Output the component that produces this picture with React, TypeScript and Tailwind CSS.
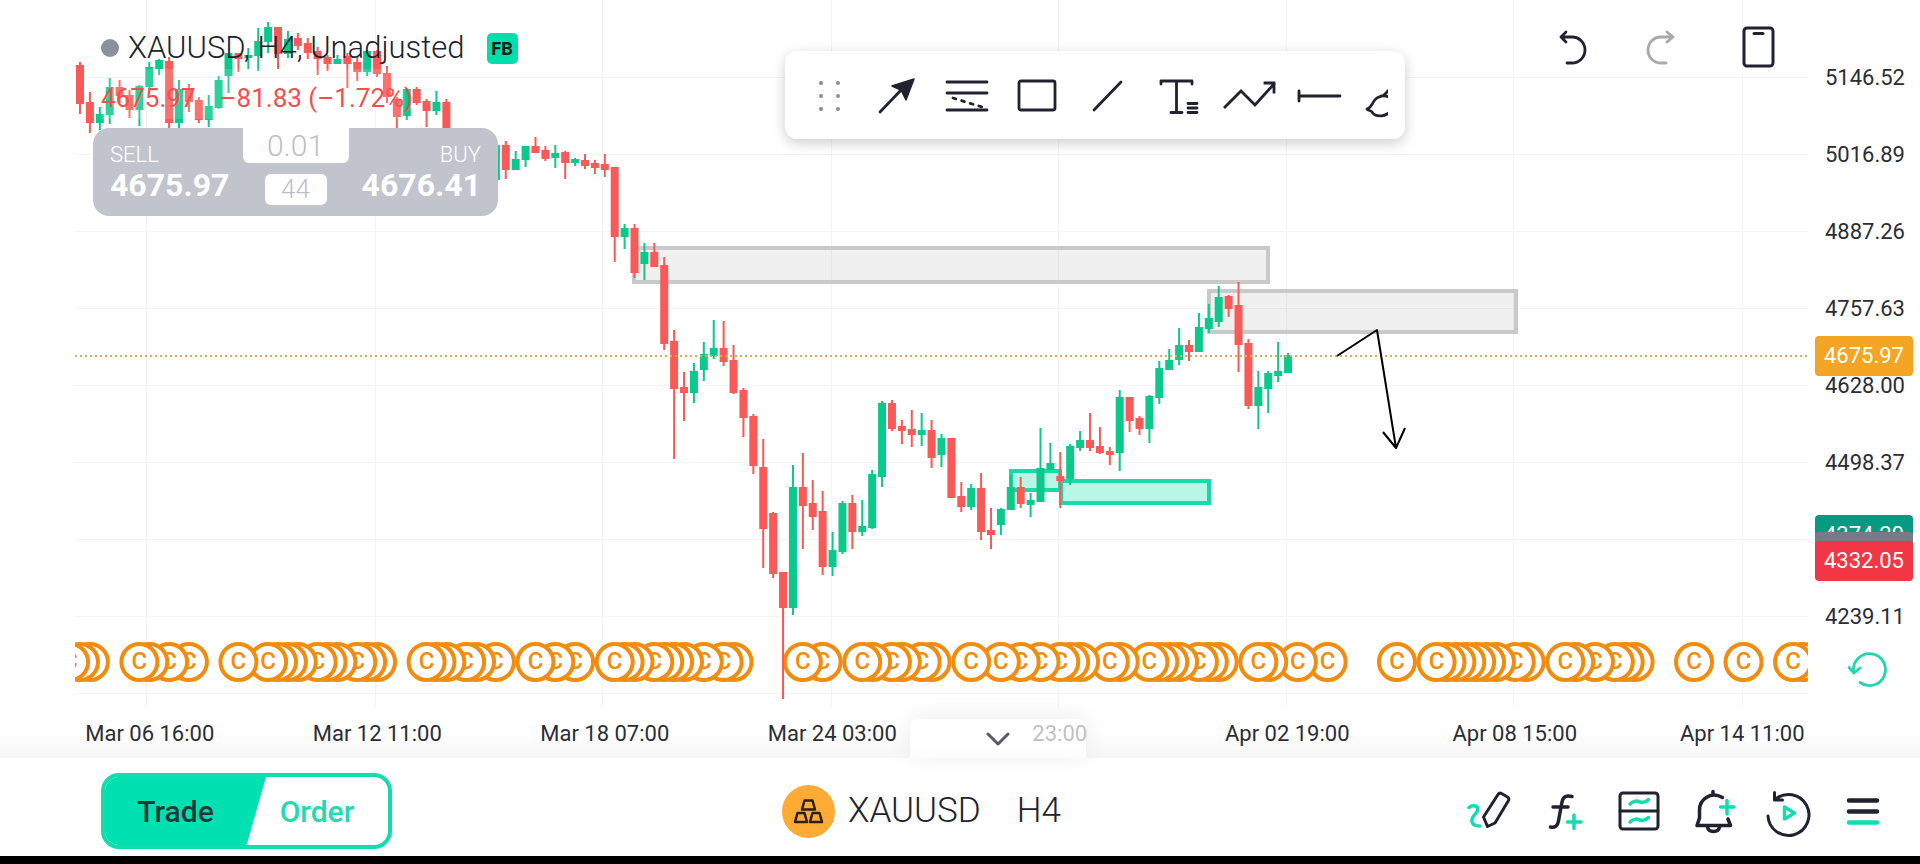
import React from 'react';

// [index, up, high, bodyTop, bodyBottom, low] in chart pixels
type Candle = [number, number, number, number, number, number];

const candles: Candle[] = [
  [0, 0, 62, 65, 104, 114], [1, 0, 92, 102, 123, 133], [2, 1, 107, 114, 123, 130], [3, 1, 78, 87, 115, 124],
  [4, 0, 80, 87, 96, 103], [5, 0, 90, 95, 110, 118], [6, 1, 85, 86, 110, 126], [7, 1, 62, 67, 87, 89],
  [8, 1, 59, 60, 69, 75], [9, 0, 57, 61, 123, 129], [10, 1, 80, 89, 123, 129], [11, 0, 84, 90, 102, 112],
  [12, 0, 97, 100, 120, 123], [13, 1, 95, 106, 120, 127], [14, 1, 76, 80, 108, 109], [15, 1, 53, 53, 76, 93],
  [16, 0, 53, 53, 59, 72], [17, 1, 48, 55, 58, 69], [18, 1, 28, 41, 56, 71], [19, 1, 22, 27, 42, 53],
  [20, 0, 27, 27, 54, 69], [21, 1, 31, 39, 54, 58], [22, 0, 33, 38, 46, 50], [23, 0, 38, 43, 53, 59],
  [24, 0, 47, 51, 59, 75], [25, 0, 55, 57, 64, 71], [26, 1, 55, 59, 64, 64], [27, 0, 53, 56, 64, 88],
  [28, 0, 57, 62, 72, 81], [29, 1, 50, 51, 72, 76], [30, 0, 50, 51, 74, 77], [31, 0, 66, 73, 97, 103],
  [32, 0, 97, 99, 117, 128], [33, 1, 88, 89, 116, 120], [34, 0, 87, 89, 103, 105], [35, 0, 99, 101, 111, 127],
  [36, 1, 91, 102, 111, 115], [37, 0, 99, 102, 140, 145], [42, 1, 145, 145, 180, 180], [43, 0, 141, 145, 170, 179],
  [44, 1, 151, 159, 170, 170], [45, 1, 146, 146, 160, 167], [46, 0, 137, 146, 153, 153], [47, 0, 146, 150, 159, 161],
  [48, 1, 145, 153, 158, 168], [49, 0, 151, 152, 163, 179], [50, 1, 158, 159, 163, 166], [51, 0, 154, 160, 166, 169],
  [52, 0, 160, 163, 168, 174], [53, 0, 154, 164, 170, 177], [54, 0, 167, 167, 237, 262], [55, 1, 224, 228, 237, 249],
  [56, 0, 224, 228, 273, 278], [57, 1, 243, 252, 264, 280], [58, 0, 243, 252, 267, 267], [59, 0, 257, 265, 344, 350],
  [60, 0, 330, 341, 389, 459], [61, 0, 372, 387, 393, 421], [62, 1, 363, 371, 393, 403], [63, 1, 342, 354, 370, 381],
  [64, 1, 320, 348, 356, 359], [65, 0, 321, 348, 362, 366], [66, 0, 345, 360, 393, 394], [67, 0, 388, 390, 418, 437],
  [68, 0, 414, 416, 466, 474], [69, 0, 439, 467, 529, 568], [70, 0, 512, 513, 574, 578], [71, 0, 572, 572, 608, 699],
  [72, 1, 465, 487, 608, 615], [73, 0, 453, 487, 506, 549], [74, 0, 480, 503, 517, 530], [75, 0, 491, 511, 567, 575],
  [76, 1, 532, 550, 567, 576], [77, 1, 501, 503, 552, 554], [78, 0, 495, 503, 532, 549], [79, 1, 500, 526, 532, 536],
  [80, 1, 470, 474, 528, 529], [81, 1, 401, 403, 477, 487], [82, 0, 400, 403, 429, 431], [83, 0, 420, 426, 431, 444],
  [84, 0, 410, 429, 435, 447], [85, 1, 413, 430, 435, 446], [86, 0, 420, 430, 458, 468], [87, 1, 434, 438, 455, 467],
  [88, 0, 438, 438, 498, 498], [89, 0, 482, 496, 507, 512], [90, 1, 484, 488, 507, 510], [91, 0, 473, 488, 532, 540],
  [92, 0, 508, 530, 535, 549], [93, 1, 508, 509, 525, 535], [94, 1, 475, 487, 510, 510], [95, 0, 477, 487, 504, 508],
  [96, 1, 493, 500, 505, 517], [97, 1, 428, 468, 502, 502], [98, 1, 443, 463, 470, 470], [99, 0, 452, 476, 481, 508],
  [100, 1, 444, 446, 479, 485], [101, 1, 431, 440, 448, 451], [102, 0, 413, 440, 448, 451], [103, 0, 427, 446, 453, 454],
  [104, 0, 447, 451, 455, 465], [105, 1, 390, 397, 453, 471], [106, 0, 397, 397, 421, 432], [107, 0, 416, 418, 429, 435],
  [108, 1, 395, 396, 429, 443], [109, 1, 361, 368, 398, 404], [110, 1, 349, 360, 370, 370], [111, 1, 328, 345, 360, 365],
  [112, 0, 340, 345, 352, 361], [113, 1, 313, 327, 352, 352], [114, 1, 304, 318, 329, 333], [115, 1, 286, 297, 322, 327],
  [116, 0, 295, 296, 309, 317], [117, 0, 282, 305, 345, 372], [118, 0, 339, 343, 406, 409], [119, 1, 371, 387, 406, 429],
  [120, 1, 371, 373, 389, 413], [121, 1, 342, 371, 376, 382], [122, 1, 353, 355, 373, 373],
];

// Bars that carry a calendar event
const events = [
  -1, 0, 1, 6, 7, 9, 11, 16, 19, 20, 21, 22, 24, 25, 26, 28, 29, 30, 35, 36, 37, 39, 40, 42, 46, 48, 50,
  54, 55, 56, 58, 59, 60, 61, 63, 65, 66, 73, 75, 79, 80, 82, 83, 85, 86, 90, 93, 95, 97, 99, 100, 101,
  104, 105, 108, 109, 110, 111, 113, 114, 115, 119, 120, 123, 126, 133, 137, 138, 139, 140, 141, 142, 143,
  145, 146, 150, 151, 153, 155, 156, 157, 163, 168, 173, 174,
];

const barX = (i: number) => 80 + i * 9.902;

const hLines = [77, 154, 231, 308, 385, 462, 539, 616, 693];
const vLines = [146, 375, 602, 831, 1058, 1286, 1513, 1742];
const prices = ['5146.52', '5016.89', '4887.26', '4757.63', '4628.00', '4498.37', '', '4239.11'];
const times = [
  'Mar 06 16:00', 'Mar 12 11:00', 'Mar 18 07:00', 'Mar 24 03:00',
  '23:00', 'Apr 02 19:00', 'Apr 08 15:00', 'Apr 14 11:00',
];

function Chart() {
  return (
    <svg className="block w-full" viewBox="75 0 1733 707" preserveAspectRatio="xMinYMin meet" role="img" aria-label="XAUUSD H4 chart">
      {hLines.map((y) => (
        <rect key={y} x="75" y={y} width="1733" height="1" fill="#f4f4f5" />
      ))}
      {vLines.map((x) => (
        <rect key={x} x={x} y="0" width="1" height="707" fill="#f4f4f5" />
      ))}

      {/* Supply and demand zones */}
      <g fill="#000000" fillOpacity="0.06" stroke="#c9c9c9" strokeWidth="4">
        <rect x="634" y="248" width="634" height="34" />
        <rect x="1209" y="291" width="307" height="41" />
      </g>
      <g fill="#baf6e6" stroke="#16dba8" strokeWidth="4">
        <rect x="1011" y="471" width="49" height="19" />
        <rect x="1061" y="481" width="148" height="22" />
      </g>

      {candles.map(([i, up, high, top, bottom, low]) => (
        <g key={i} fill={up ? '#0ac98b' : '#f95a57'}>
          <rect x={barX(i) - 1} y={high} width="2" height={low - high} />
          <rect x={barX(i) - 4} y={top} width="8" height={bottom - top} />
        </g>
      ))}

      <line x1="75" x2="1808" y1="356" y2="356" stroke="#deb04c" strokeWidth="2" strokeDasharray="2 3" />

      {/* Forecast arrow */}
      <path
        d="M1337 356L1377 330L1396 448M1383 432L1396 448L1405 428"
        fill="none"
        stroke="#000000"
        strokeWidth="2"
        strokeLinejoin="round"
      />

      {/* Leftmost event of a cluster sits on top */}
      {[...events].reverse().map((i) => (
        <g key={i}>
          <circle cx={barX(i)} cy="662" r="18" fill="#ffffff" stroke="#f28c0f" strokeWidth="4" />
          <text x={barX(i)} y="669" textAnchor="middle" fontFamily="Roboto, sans-serif" fontSize="24" fontWeight="500" fill="#f28c0f">
            C
          </text>
        </g>
      ))}
      <rect x={barX(71) - 1} y="608" width="2" height="91" fill="#f95a57" />
    </svg>
  );
}

function ToolButton({ label, children }: { label: string; children: React.ReactNode }) {
  return (
    <button type="button" aria-label={label} className="flex w-[70px] shrink-0 justify-center">
      <svg
        className="size-12 overflow-visible"
        viewBox="0 0 48 48"
        fill="none"
        stroke="#20232f"
        strokeWidth="2.8"
        strokeLinecap="round"
        strokeLinejoin="round"
      >
        {children}
      </svg>
    </button>
  );
}

function DrawingToolbar() {
  return (
    <div className="absolute left-[785px] top-[51px] flex h-[88px] w-[620px] items-center rounded-xl bg-white pl-8 pt-[2px] shadow-[0_4px_14px_rgba(0,0,0,0.2)]">
      <svg className="h-9 w-[45px] shrink-0" viewBox="0 0 45 36" fill="#8d8d8d">
        <circle cx="4" cy="5" r="2" />
        <circle cx="21" cy="5" r="2" />
        <circle cx="4" cy="18" r="2" />
        <circle cx="21" cy="18" r="2" />
        <circle cx="4" cy="31" r="2" />
        <circle cx="21" cy="31" r="2" />
      </svg>
      <div className="flex w-[526px] overflow-hidden">
        <ToolButton label="Arrow">
          <path d="M7 40L30 16" />
          <path d="M41 7L19 14L28 18L33 28Z" fill="#20232f" strokeWidth="1.5" />
        </ToolButton>
        <ToolButton label="Fibonacci retracement">
          <path d="M4 10H44M4 21H44M4 38H44" />
          <path d="M10 26L39 35" strokeDasharray="3 6" />
        </ToolButton>
        <ToolButton label="Rectangle">
          <rect x="6" y="9" width="36" height="29" rx="2" />
        </ToolButton>
        <ToolButton label="Trend line">
          <path d="M11 38L38 10" />
        </ToolButton>
        <ToolButton label="Text">
          <path d="M8 12V9H39V12M23.500 9V40M18 40.500H29M35 31.500H44M35 36H44M35 40.500H44" />
        </ToolButton>
        <ToolButton label="Path">
          <path d="M2 35L18 19L32 33L51 12M42 11H51V20" strokeLinecap="square" strokeLinejoin="miter" />
        </ToolButton>
        <ToolButton label="Horizontal ray">
          <path d="M6 19V29M6 24H47" />
        </ToolButton>
        <ToolButton label="Brush">
          <path d="M27 17L20 24M28 27C24 23 20 23 16 25C8 28 11 35 4 37C5 39 8 38 9 40C13 46 23 45 29 38" />
        </ToolButton>
      </div>
    </div>
  );
}

function QuotePanel() {
  return (
    <div className="absolute left-[93px] top-[128px] flex h-[88px] w-[405px] justify-between overflow-hidden rounded-2xl bg-[#c1c4cc] px-[17px] text-white">
      <button type="button" className="flex w-[120px] flex-col items-start pt-[13px] text-left">
        <span className="text-[22px] leading-7 font-light">SELL</span>
        <span className="text-[32px] leading-8 font-bold">4675.97</span>
      </button>
      <div className="flex flex-col items-center gap-[11px] font-light text-[#bdbfc5]">
        <input
          aria-label="Lot size"
          defaultValue="0.01"
          className="h-[35px] w-[106px] rounded-b-md bg-white text-center text-[30px] leading-8"
        />
        <span className="h-[31px] w-[62px] rounded-md bg-white text-center text-[26px] leading-[30px]">44</span>
      </div>
      <button type="button" className="flex w-[120px] flex-col items-end pt-[13px] text-right">
        <span className="text-[22px] leading-7 font-light">BUY</span>
        <span className="text-[32px] leading-8 font-bold">4676.41</span>
      </button>
    </div>
  );
}

function PriceAxis() {
  return (
    <div className="relative w-28 shrink-0 pt-[39px] text-[22px] text-[#2a2d37]">
      {prices.map((p, i) => (
        <div key={i} className="flex h-[77px] items-center pl-[17px]">{p}</div>
      ))}
      <div className="absolute left-[7px] top-[336px] flex h-10 w-[98px] items-center justify-center rounded bg-[#f5a524] pb-[2px] text-white">4675.97</div>
      <div className="absolute left-[7px] top-[515px] flex h-10 w-[98px] items-center justify-center rounded bg-[#089981] pb-[2px] text-white">4374.20</div>
      <div className="absolute left-[7px] top-[532px] h-10 w-[98px] rounded bg-[#787b86]" />
      <div className="absolute left-[7px] top-[541px] flex h-10 w-[98px] items-center justify-center rounded bg-[#f23645] pb-[2px] text-white">4332.05</div>
      <button type="button" aria-label="Reset scale" className="absolute left-9 top-[648px]">
        <svg className="size-11" viewBox="0 0 44 44" fill="none" stroke="#1fd6ae" strokeWidth="2.8" strokeLinecap="round" strokeLinejoin="round">
          <path d="M16 34.500A16 16 0 1 0 9.500 23" />
          <path d="M5 19.500L10 25L16 20" />
        </svg>
      </button>
    </div>
  );
}

function NavButton({ label, children }: { label: string; children: React.ReactNode }) {
  return (
    <button type="button" aria-label={label} className="flex w-[75px] justify-center">
      <svg
        className="size-12 overflow-visible"
        viewBox="0 0 48 48"
        fill="none"
        stroke="#20232f"
        strokeWidth="3.5"
        strokeLinecap="round"
        strokeLinejoin="round"
      >
        {children}
      </svg>
    </button>
  );
}

function BottomBar() {
  return (
    <footer className="flex h-[98px] items-center justify-between bg-white pl-[101px] pr-[19px] pt-2">
      <div className="flex h-[76px] w-[291px] overflow-hidden rounded-[18px] border-4 border-[#10dcae] bg-white">
        <button
          type="button"
          className="w-[161px] bg-[#00e0b0] pr-5 text-center text-[30px] font-medium text-[#1b3b3a] [clip-path:polygon(0_0,100%_0,88%_100%,0_100%)]"
        >
          Trade
        </button>
        <button type="button" className="flex-1 pr-5 text-center text-[30px] font-medium text-[#1ddcb0]">
          Order
        </button>
      </div>

      <div className="flex items-center text-[35px] font-light text-[#20232f]">
        <svg className="mr-[13px] size-[53px]" viewBox="0 0 53 53" fill="none">
          <circle cx="26.500" cy="26.500" r="26.500" fill="#ffab36" />
          <g stroke="#2b2112" strokeWidth="2.500" strokeLinejoin="round">
            <path d="M22.500 15.500H30.500L33 24.500H20Z" />
            <path d="M15.500 28H22.500L25 37H13Z" />
            <path d="M30.500 28H37.500L40 37H28Z" />
          </g>
        </svg>
        <button type="button">XAUUSD</button>
        <button type="button" className="ml-[36px]">H4</button>
      </div>

      <nav className="flex">
        <NavButton label="Drawing tools">
          <path d="M5 20.500C9 17 15 19 13.500 23.500C12 28 6.500 30 8 35C9 38 12 39 15.500 39" stroke="#14dcae" />
          <path d="M23.500 39.500L19.500 30L34 7.500Q35.500 5.500 37.500 6.500L43.500 10Q45.500 11.500 44.500 13.500L31 36Z" strokeWidth="3" />
        </NavButton>
        <NavButton label="Indicators">
          <path d="M33 9.500C27 8 24 10 23 15L19.500 34C18.800 38.500 16 41 11.500 40M14 20H29" />
          <path d="M35 28V41.500M28.500 35H42" stroke="#14dcae" />
        </NavButton>
        <NavButton label="Layout">
          <rect x="6" y="6" width="38" height="36" rx="3" strokeWidth="3" />
          <path d="M6 24H44" strokeWidth="3" />
          <path d="M16 17C20 13 23 14 26 15C29 16 32 15 34.500 12.500M16 35C20 31 23 32 26 33C29 34 32 33 34.500 30.500" stroke="#14dcae" />
        </NavButton>
        <NavButton label="Add alert">
          <path d="M24 4.500V8M33.500 10.500C22 4 10.500 12 10.500 23V31L8 38.500H41.500L39 32" />
          <path d="M18.500 40C19.500 46 29.500 46 30.500 40" />
          <path d="M38 13.500V27M31.500 20H45" stroke="#14dcae" />
        </NavButton>
        <NavButton label="Replay">
          <path d="M4 29A20.500 20.500 0 1 0 11 12.500M10.500 5.500V13H18.500" strokeWidth="3" />
          <path d="M20.500 20V32L30.500 26Z" stroke="#14dcae" strokeWidth="3.500" />
        </NavButton>
        <NavButton label="Menu">
          <path d="M10 13.500H38M10 24.500H38" strokeWidth="4.500" />
          <path d="M10 35.500H38" stroke="#14dcae" strokeWidth="4.500" />
        </NavButton>
      </nav>
    </footer>
  );
}

export default function App() {
  return (
    <div className="min-h-screen overflow-hidden bg-white font-[Roboto,sans-serif]">
      <main className="relative">
        <div className="flex h-[707px] pl-[75px]">
          <div className="min-w-0 flex-1">
            <Chart />
          </div>
          <PriceAxis />
        </div>

        {/* Time axis */}
        <div className="grid h-[51px] grid-cols-8 bg-linear-to-b from-white from-50% to-[#f6f6f6] pl-9 pr-16 pt-[11px] text-center text-[22px] leading-8 text-[#2a2d37]">
          {times.map((time) => (
            <span key={time}>{time}</span>
          ))}
        </div>
        <button
          type="button"
          aria-label="Collapse panel"
          className="absolute bottom-0 left-[910px] flex h-[39px] w-[176px] items-center justify-center rounded-t-lg bg-white/70 shadow-[0_-2px_24px_rgba(0,0,0,0.08)]"
        >
          <svg className="h-4 w-6" viewBox="0 0 24 16" fill="none" stroke="#565b66" strokeWidth="3" strokeLinecap="round" strokeLinejoin="round">
            <path d="M2 3L12 13L22 3" />
          </svg>
        </button>

        {/* Symbol legend */}
        <div className="absolute left-[101px] top-[27px] text-[#20232f]">
          <div className="flex items-center">
            <span className="size-[18px] rounded-full bg-[#8b909e]" />
            <h1 className="ml-[9px] text-[31px] leading-[42px] font-light">XAUUSD, H4, Unadjusted</h1>
            <span className="ml-[22px] flex size-[31px] items-center justify-center rounded-[5px] bg-[#00dfab] text-[18px] font-extrabold text-[#10201e]">FB</span>
          </div>
          <div className="flex h-[50px] w-[304px] items-center gap-6 whitespace-nowrap bg-white/15 pt-2 text-[26px] text-[#f2504e]">
            <span>4675.97</span>
            <span>–81.83 (–1.72%)</span>
          </div>
        </div>

        <QuotePanel />
        <DrawingToolbar />

        <div className="absolute right-[142px] top-6 flex items-center">
          <button type="button" aria-label="Undo">
            <svg className="size-12" viewBox="0 0 48 48" fill="none" stroke="#20232f" strokeWidth="2.8" strokeLinecap="round" strokeLinejoin="round">
              <path d="M16 39H21A13 13 0 0 0 21 13H10M15 8L10 13L15 18" />
            </svg>
          </button>
          <button type="button" aria-label="Redo" disabled className="ml-10">
            <svg className="size-12" viewBox="0 0 48 48" fill="none" stroke="#a9a9a9" strokeWidth="2.8" strokeLinecap="round" strokeLinejoin="round">
              <path d="M27 39H22A13 13 0 0 1 22 13H34M28 8L34 13L28 18" />
            </svg>
          </button>
          <button type="button" aria-label="Rotate screen" className="ml-[43px]">
            <svg className="size-12" viewBox="0 0 48 48" fill="none" stroke="#20232f" strokeWidth="3" strokeLinecap="round" strokeLinejoin="round">
              <rect x="14" y="4" width="29" height="38" rx="3" />
              <path d="M24 9.500H33" />
            </svg>
          </button>
        </div>
      </main>

      <BottomBar />
      <div className="h-2 bg-black" />
    </div>
  );
}
